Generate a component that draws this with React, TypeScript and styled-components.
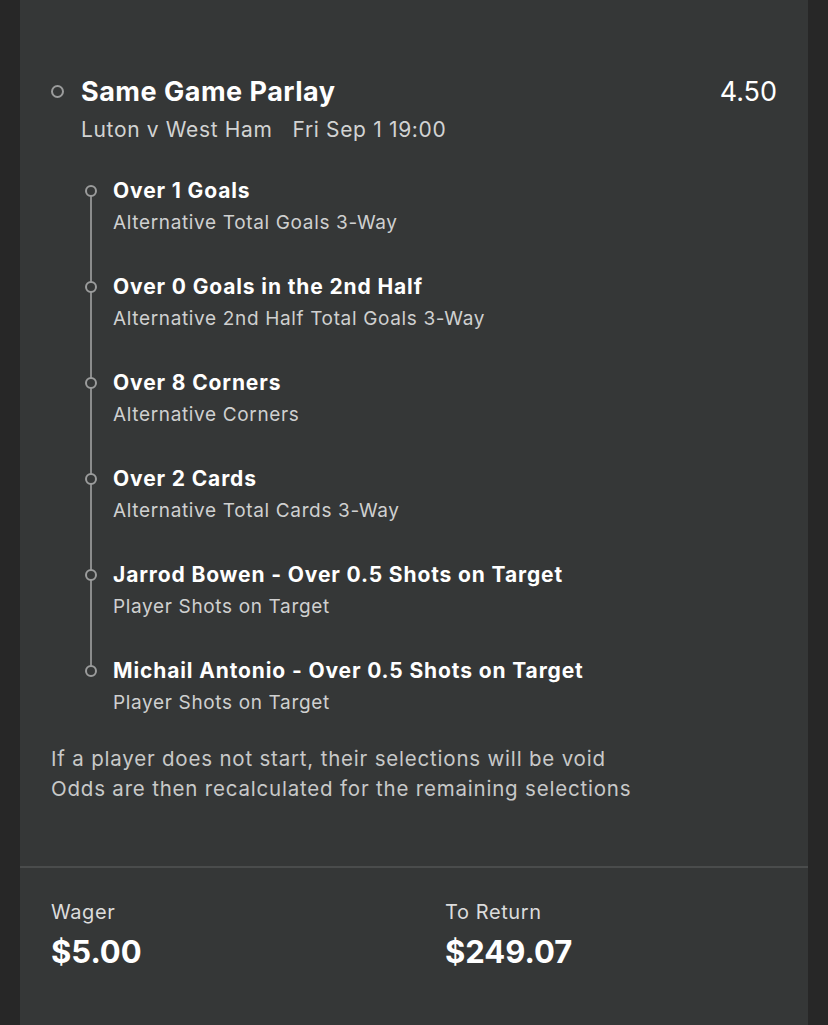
import React from 'react';
import styled, { createGlobalStyle } from 'styled-components';

const GlobalStyle = createGlobalStyle`
  html, body {
    margin: 0;
    padding: 0;
    background: #272727;
  }
  body {
    font-family: Inter, "Noto Sans", sans-serif;
    -webkit-font-smoothing: antialiased;
  }
`;

const Panel = styled.div`
  width: 788px;
  margin-left: 20px;
  min-height: 1025px;
  background: #353737;
  display: flex;
  flex-direction: column;
`;

const Body = styled.div`
  padding: 73px 31px 62px 31px;
`;

const HeaderRow = styled.div`
  display: flex;
  align-items: flex-start;
`;

const Ring = styled.span<{ $size: number }>`
  flex: none;
  box-sizing: border-box;
  width: ${p => p.$size}px;
  height: ${p => p.$size}px;
  border: 2px solid #9b9c9c;
  border-radius: 50%;
  background: #353737;
  position: relative;
  z-index: 1;
`;

const HeaderRing = styled(Ring)`
  margin: 12px 17px 0 0;
`;

const HeaderText = styled.div`
  flex: 1;
`;

const TitleLine = styled.div`
  display: flex;
  justify-content: space-between;
  align-items: center;
  height: 36px;
`;

const Title = styled.div`
  color: #fff;
  font-size: 27px;
  font-weight: 700;
  letter-spacing: 0.5px;
`;

const Odds = styled.div`
  color: #fff;
  font-size: 27px;
  font-weight: 400;
`;

const Fixture = styled.div`
  margin-top: 5px;
  color: #d2d3d3;
  font-size: 21px;
  line-height: 32px;
  letter-spacing: 0.65px;
  span + span {
    margin-left: 20px;
  }
`;

const Legs = styled.ul`
  list-style: none;
  margin: 29px 0 0 34px;
  padding: 0;
  display: flex;
  flex-direction: column;
  gap: 32px;
`;

const Leg = styled.li`
  position: relative;
  display: flex;
  align-items: flex-start;
  &:not(:last-child)::before {
    content: '';
    position: absolute;
    left: 5px;
    top: 16px;
    width: 2px;
    height: 96px;
    background: #8b8c8c;
  }
`;

const LegRing = styled(Ring)`
  margin: 10px 16px 0 0;
`;

const LegTitle = styled.div`
  color: #fff;
  font-size: 21px;
  font-weight: 700;
  line-height: 32px;
  letter-spacing: 0.87px;
`;

const LegMarket = styled.div`
  color: #cfd0d0;
  font-size: 19px;
  line-height: 32px;
  letter-spacing: 0.65px;
`;

const Notes = styled.div`
  margin-top: 25px;
  color: #c8c9c9;
  font-size: 20.5px;
  line-height: 30px;
  letter-spacing: 0.8px;
`;

const Footer = styled.div`
  flex: 1;
  border-top: 2px solid #4a4c4c;
  display: grid;
  grid-template-columns: 394px 1fr;
  padding: 30px 31px 0 31px;
`;

const Stat = styled.div`
  display: flex;
  flex-direction: column;
`;

const StatLabel = styled.div`
  color: #dcdcdc;
  font-size: 20px;
  line-height: 28px;
  letter-spacing: 0.6px;
`;

const StatValue = styled.div`
  margin-top: 6px;
  color: #fff;
  font-size: 31px;
  font-weight: 700;
  line-height: 40px;
`;

const legs = [
  { title: 'Over 1 Goals', market: 'Alternative Total Goals 3-Way' },
  { title: 'Over 0 Goals in the 2nd Half', market: 'Alternative 2nd Half Total Goals 3-Way' },
  { title: 'Over 8 Corners', market: 'Alternative Corners' },
  { title: 'Over 2 Cards', market: 'Alternative Total Cards 3-Way' },
  { title: 'Jarrod Bowen - Over 0.5 Shots on Target', market: 'Player Shots on Target' },
  { title: 'Michail Antonio - Over 0.5 Shots on Target', market: 'Player Shots on Target' },
];

const App = () => {
  return (
    <>
      <GlobalStyle />
      <Panel>
        <Body>
          <HeaderRow>
            <HeaderRing $size={13} />
            <HeaderText>
              <TitleLine>
                <Title>Same Game Parlay</Title>
                <Odds>4.50</Odds>
              </TitleLine>
              <Fixture>
                <span>Luton v West Ham</span>
                <span>Fri Sep 1 19:00</span>
              </Fixture>
            </HeaderText>
          </HeaderRow>
          <Legs>
            {legs.map((leg, i) => (
              <Leg key={i}>
                <LegRing $size={12} />
                <div>
                  <LegTitle>{leg.title}</LegTitle>
                  <LegMarket>{leg.market}</LegMarket>
                </div>
              </Leg>
            ))}
          </Legs>
          <Notes>
            If a player does not start, their selections will be void
            <br />
            Odds are then recalculated for the remaining selections
          </Notes>
        </Body>
        <Footer>
          <Stat>
            <StatLabel>Wager</StatLabel>
            <StatValue>$5.00</StatValue>
          </Stat>
          <Stat>
            <StatLabel>To Return</StatLabel>
            <StatValue>$249.07</StatValue>
          </Stat>
        </Footer>
      </Panel>
    </>
  );
};

export default App;
